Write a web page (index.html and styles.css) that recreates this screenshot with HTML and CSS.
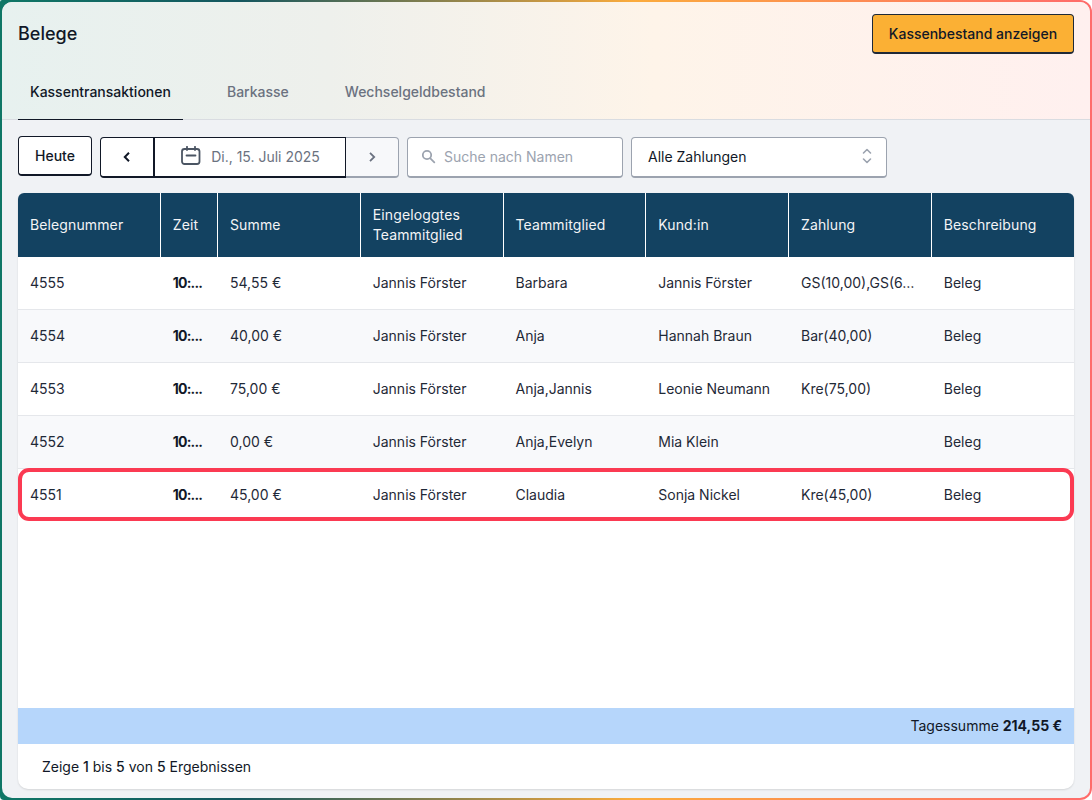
FILE: index.html
```html
<!DOCTYPE html>
<html lang="de">
<head>
<meta charset="utf-8">
<title>Belege</title>
<link rel="stylesheet" href="styles.css">
</head>
<body>
<div class="frame">
  <div class="app">
    <header class="top">
      <div class="title-row">
        <h1>Belege</h1>
        <button class="btn-primary">Kassenbestand anzeigen</button>
      </div>
      <nav class="tabs">
        <a class="tab active">Kassentransaktionen</a>
        <a class="tab">Barkasse</a>
        <a class="tab">Wechselgeldbestand</a>
      </nav>
    </header>
    <main class="content">
      <div class="toolbar">
        <button class="btn-today">Heute</button>
        <div class="date-nav">
          <button class="nav-prev"><svg width="12" height="12" viewBox="0 0 12 12" fill="none" stroke="#111827" stroke-width="2"><path d="M8 1.8 3.8 6 8 10.2"/></svg></button>
          <div class="date-current">
            <svg width="20" height="20" viewBox="0 0 20 20" fill="none" stroke="#4b5563" stroke-width="1.8" stroke-linecap="round" stroke-linejoin="round"><rect x="1" y="3" width="17.5" height="15" rx="2.5"/><path d="M6 .8V4M14 .8V4M5.500 9.500h9"/></svg>
            <span>Di., 15. Juli 2025</span>
          </div>
          <button class="nav-next"><svg width="12" height="12" viewBox="0 0 12 12" fill="none" stroke="#6b7280" stroke-width="1.8"><path d="M4 1.8 8.200 6 4 10.200"/></svg></button>
        </div>
        <label class="search">
          <svg width="15" height="15" viewBox="0 0 15 15" fill="none" stroke="#9ca3af" stroke-width="1.8" stroke-linecap="round"><circle cx="6" cy="6" r="4.200"/><path d="m9.300 9.300 4 4"/></svg>
          <span>Suche nach Namen</span>
        </label>
        <div class="select">
          <span>Alle Zahlungen</span>
          <svg width="10" height="16" viewBox="0 0 10 16" fill="none" stroke="#9ca3af" stroke-width="1.6" stroke-linecap="round" stroke-linejoin="round"><path d="M1.500 5 5 1.500 8.500 5M1.500 11 5 14.500 8.500 11"/></svg>
        </div>
      </div>
      <section class="card">
        <div class="row head">
          <div>Belegnummer</div><div>Zeit</div><div>Summe</div><div>Eingeloggtes Teammitglied</div><div>Teammitglied</div><div>Kund:in</div><div>Zahlung</div><div>Beschreibung</div>
        </div>
        <div class="row">
          <div>4555</div><div class="time">10:...</div><div>54,55 €</div><div>Jannis Förster</div><div>Barbara</div><div>Jannis Förster</div><div>GS(10,00),GS(6…</div><div>Beleg</div>
        </div>
        <div class="row alt">
          <div>4554</div><div class="time">10:...</div><div>40,00 €</div><div>Jannis Förster</div><div>Anja</div><div>Hannah Braun</div><div>Bar(40,00)</div><div>Beleg</div>
        </div>
        <div class="row">
          <div>4553</div><div class="time">10:...</div><div>75,00 €</div><div>Jannis Förster</div><div>Anja,Jannis</div><div>Leonie Neumann</div><div>Kre(75,00)</div><div>Beleg</div>
        </div>
        <div class="row alt">
          <div>4552</div><div class="time">10:...</div><div>0,00 €</div><div>Jannis Förster</div><div>Anja,Evelyn</div><div>Mia Klein</div><div></div><div>Beleg</div>
        </div>
        <div class="row marked">
          <div>4551</div><div class="time">10:...</div><div>45,00 €</div><div>Jannis Förster</div><div>Claudia</div><div>Sonja Nickel</div><div>Kre(45,00)</div><div>Beleg</div>
        </div>
        <div class="spacer"></div>
        <div class="total">Tagessumme <strong>214,55 €</strong></div>
        <div class="pager">Zeige <b>1</b> bis <b>5</b> von <b>5</b> Ergebnissen</div>
      </section>
    </main>
  </div>
</div>
</body>
</html>
```
FILE: styles.css
```css
* { box-sizing: border-box; }
html, body { margin: 0; height: 800px; }
body { font-family: Inter, "Liberation Sans", sans-serif; color: #111827; font-size: 14px; overflow: hidden; background: #fff; }
button { font: inherit; color: inherit; cursor: pointer; }

.frame {
  height: 800px;
  padding: 2px;
  border-radius: 2px 12px 12px 4px;
  background: linear-gradient(90deg, #0f7766 0%, #14565f 22%, #fbab3c 58%, #ff6b6b 100%);
}
.app {
  height: 796px;
  border-radius: 10px;
  overflow: hidden;
  background: #f0f2f5;
  display: flex;
  flex-direction: column;
}

.top {
  height: 118px;
  flex: none;
  border-bottom: 1px solid #d9dce1;
  background: linear-gradient(90deg, #e7f1ef 0%, #eef0ec 30%, #fef4e9 60%, #fff0ef 100%);
  padding: 12px 16px 0;
  display: flex;
  flex-direction: column;
}
.title-row { display: flex; justify-content: space-between; align-items: flex-start; }
h1 { margin: 9px 0 0; font-size: 18px; line-height: 22px; font-weight: 500; color: #111827; }
.btn-primary {
  height: 40px;
  width: 202px;
  border: 1px solid #1f2937;
  border-bottom-width: 2px;
  border-radius: 4px;
  background: #fbb034;
  font-weight: 500;
  font-size: 14px;
  padding: 0;
}
.tabs { display: flex; margin-top: auto; gap: 32px; }
.tab {
  height: 38px;
  margin-bottom: -1px;
  padding: 0 12px;
  font-weight: 500;
  font-size: 14px;
  line-height: 20px;
  color: #6b7280;
}
.tab.active { color: #111827; border-bottom: 1px solid #111827; }

.content { flex: 1; display: flex; flex-direction: column; padding: 16px 16px 9px; min-height: 0; }
.toolbar { display: flex; gap: 8px; height: 41px; margin-bottom: 16px; align-items: flex-start; }
.btn-today {
  width: 74px;
  height: 40px;
  background: #fff;
  border: 1px solid #111827;
  border-bottom-width: 2px;
  border-radius: 4px;
  font-weight: 500;
  font-size: 14px;
  padding: 0;
}
.date-nav { display: flex; height: 41px; margin-top: 1px; }
.nav-prev {
  width: 55px;
  background: #fff;
  border: 1px solid #111827;
  border-bottom-width: 2px;
  border-right-width: 2px;
  border-radius: 4px 0 0 4px;
  padding: 0 0 1px;
  display: flex; align-items: center; justify-content: center;
}
.date-current {
  width: 191px;
  background: #fff;
  border: 1px solid #111827;
  border-width: 1px 1px 2px 0;
  padding: 0 0 2px 1px;
  display: flex; align-items: center; justify-content: center; gap: 10px;
  color: #6b7280;
  font-size: 14px;
}
.nav-next {
  width: 53px;
  background: #f7f8fa;
  border: 1px solid #9ca3af;
  border-left: 0;
  border-bottom-width: 2px;
  border-radius: 0 4px 4px 0;
  padding: 0 0 1px;
  display: flex; align-items: center; justify-content: center;
}
.search, .select {
  height: 41px;
  margin-top: 1px;
  background: #fff;
  border: 1px solid #9ca3af;
  border-bottom-width: 2px;
  border-radius: 4px;
  display: flex;
  align-items: center;
}
.search { width: 216px; padding: 0 0 2px 13px; gap: 8px; color: #9ca3af; }
.select { width: 256px; padding: 0 14px 2px 16px; justify-content: space-between; color: #111827; }

.card {
  flex: 1;
  min-height: 0;
  display: flex;
  flex-direction: column;
  background: #fff;
  border-radius: 6px 6px 10px 10px;
  overflow: hidden;
  box-shadow: 0 1px 2px rgba(0,0,0,.12);
}
.row {
  display: grid;
  grid-template-columns: 142.75px 57.25px 142.75px 142.75px 142.75px 142.75px 142.75px 142.25px;
  height: 53px;
  flex: none;
  align-items: center;
  font-size: 14px;
  border-bottom: 1px solid #e5e7eb;
  position: relative;
  color: #1f2937;
}
.row > div { padding: 0 12px; line-height: 20px; white-space: nowrap; }
.row.alt { background: #f8f9fb; }
.row .time { font-weight: 700; color: #111827; letter-spacing: -.8px; }
.row.head {
  height: 64px;
  background: #134261;
  color: #f3f4f6;
  border-bottom: 0;
  align-items: stretch;
  font-weight: 400;
  letter-spacing: .12px;
}
.row.head > div {
  white-space: normal;
  display: flex;
  align-items: center;
  border-right: 1px solid #fff;
  line-height: 20px;
}
.row.head > div:last-child { border-right: 0; }
.row.marked { border-bottom-color: transparent; }
.row.marked::after {
  content: "";
  position: absolute;
  inset: -1px 0 0 0;
  border: 4px solid #fb3a52;
  border-radius: 11px;
}
.spacer { flex: 1; }
.total {
  height: 36px;
  flex: none;
  background: #b6d6fb;
  text-align: right;
  padding: 0 12px;
  line-height: 36px;
  color: #111827;
}
.total strong { font-weight: 700; }
.pager {
  height: 45px;
  flex: none;
  padding: 0 24px;
  line-height: 45px;
  color: #111827;
}
.pager b { font-weight: 500; }
```
